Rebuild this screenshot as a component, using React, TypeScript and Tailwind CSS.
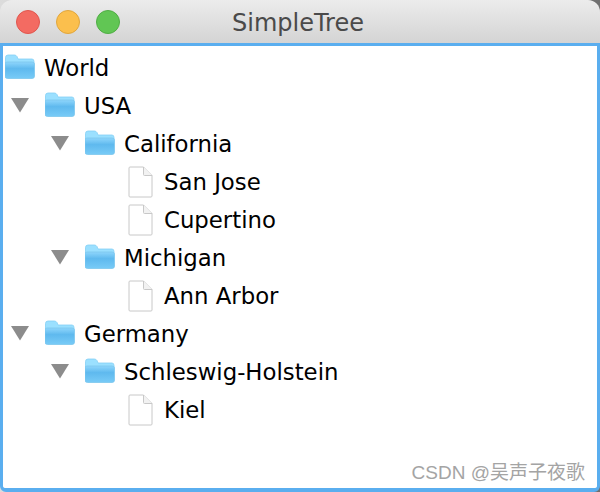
// SimpleTree - macOS Swing JTree window

type Kind = 'folder' | 'file'

type Node = {
  label: string
  kind: Kind
  open?: boolean
  indent: string
}

const nodes: Node[] = [
  { label: 'World', kind: 'folder', indent: 'pl-[2px]' },
  { label: 'USA', kind: 'folder', open: true, indent: 'pl-[7px]' },
  { label: 'California', kind: 'folder', open: true, indent: 'pl-[47px]' },
  { label: 'San Jose', kind: 'file', indent: 'pl-[125px]' },
  { label: 'Cupertino', kind: 'file', indent: 'pl-[125px]' },
  { label: 'Michigan', kind: 'folder', open: true, indent: 'pl-[47px]' },
  { label: 'Ann Arbor', kind: 'file', indent: 'pl-[125px]' },
  { label: 'Germany', kind: 'folder', open: true, indent: 'pl-[7px]' },
  { label: 'Schleswig-Holstein', kind: 'folder', open: true, indent: 'pl-[47px]' },
  { label: 'Kiel', kind: 'file', indent: 'pl-[125px]' },
]

function Folder() {
  return (
    <svg width="31" height="26" viewBox="1 0 31 26" className="shrink-0 -translate-y-[1px]">
      <defs>
        <linearGradient id="folderFront" x1="0" y1="0" x2="0" y2="1">
          <stop offset="0" stopColor="#8fd6fc" />
          <stop offset="0.4" stopColor="#5fb9ee" />
          <stop offset="1" stopColor="#78cbf7" />
        </linearGradient>
      </defs>
      <path d="M1.5 9V3.5Q1.5 1 4 1H10.5Q12 1 13 2.5L14 5H28Q30 5 30 7.5V10H1.5Z" fill="#9be0ff" stroke="#84cff5" strokeWidth="0.8" />
      <path d="M1 10Q1 8 3 8H28Q30.5 8 30.5 10V22Q30.5 24.5 28 24.5H3.5Q1 24.5 1 22Z" fill="url(#folderFront)" stroke="#7cc6ee" strokeWidth="0.8" />
    </svg>
  )
}

function FileIcon() {
  return (
    <svg width="25" height="32" viewBox="0 0 25 32" className="shrink-0">
      <path d="M1 2Q1 1 2 1H15.5L24 9.5V30Q24 31 23 31H2Q1 31 1 30Z" fill="#ffffff" stroke="#c8c8c8" strokeWidth="1" />
      <path d="M15.5 1V8.5Q15.5 9.5 16.5 9.5H24" fill="#f2f2f2" stroke="#c8c8c8" strokeWidth="1" />
    </svg>
  )
}

function Triangle() {
  return (
    <svg width="20" height="16" viewBox="0 0 20 16" className="shrink-0 mr-[15px] -translate-y-[1px]">
      <path d="M1 1H19L10 15.5Z" fill="#8c8c8c" />
    </svg>
  )
}

function Row({ node }: { node: Node }) {
  return (
    <div className={`flex h-[38px] items-center ${node.indent}`}>
      {node.open && <Triangle />}
      {node.kind === 'folder' ? <Folder /> : <FileIcon />}
      <span className={node.kind === 'folder' ? 'ml-[8px]' : 'ml-[11px]'}>{node.label}</span>
    </div>
  )
}

export default function App() {
  return (
    <div className="relative h-[492px] w-[600px] overflow-hidden bg-gradient-to-r from-[#dcdcdc] to-[#707070] font-['DejaVu_Sans',sans-serif] text-[22.8px] text-black">
      <div className="flex h-full flex-col overflow-hidden rounded-t-[12px]">
        {/* title bar */}
        <div className="relative flex h-[43px] shrink-0 items-center justify-center bg-gradient-to-b from-[#ececec] to-[#d4d4d4] pr-[4px] pt-[2px]">
          <div className="absolute left-[16px] top-[10px] flex gap-[16px]">
            <div className="h-[24px] w-[24px] rounded-full border border-[#e0564e] bg-[#f36b62]" />
            <div className="h-[24px] w-[24px] rounded-full border border-[#e0a63d] bg-[#fbbf4d]" />
            <div className="h-[24px] w-[24px] rounded-full border border-[#50ad45] bg-[#61c654]" />
          </div>
          <span className="text-[24px] text-[#4a4a4a]">SimpleTree</span>
        </div>

        {/* tree */}
        <div className="flex-1 rounded-b-[6px] border-[3px] border-b-[4px] border-[#5aaeef] bg-white pt-[3px]">
          {nodes.map((n) => (
            <Row key={n.label} node={n} />
          ))}
        </div>
      </div>

      <span className="absolute right-[15px] top-[463px] font-['Liberation_Sans','Noto_Sans_CJK_SC',sans-serif] text-[19px] leading-[20px] text-[#a4a4a4]">
        CSDN @吴声子夜歌
      </span>
    </div>
  )
}
